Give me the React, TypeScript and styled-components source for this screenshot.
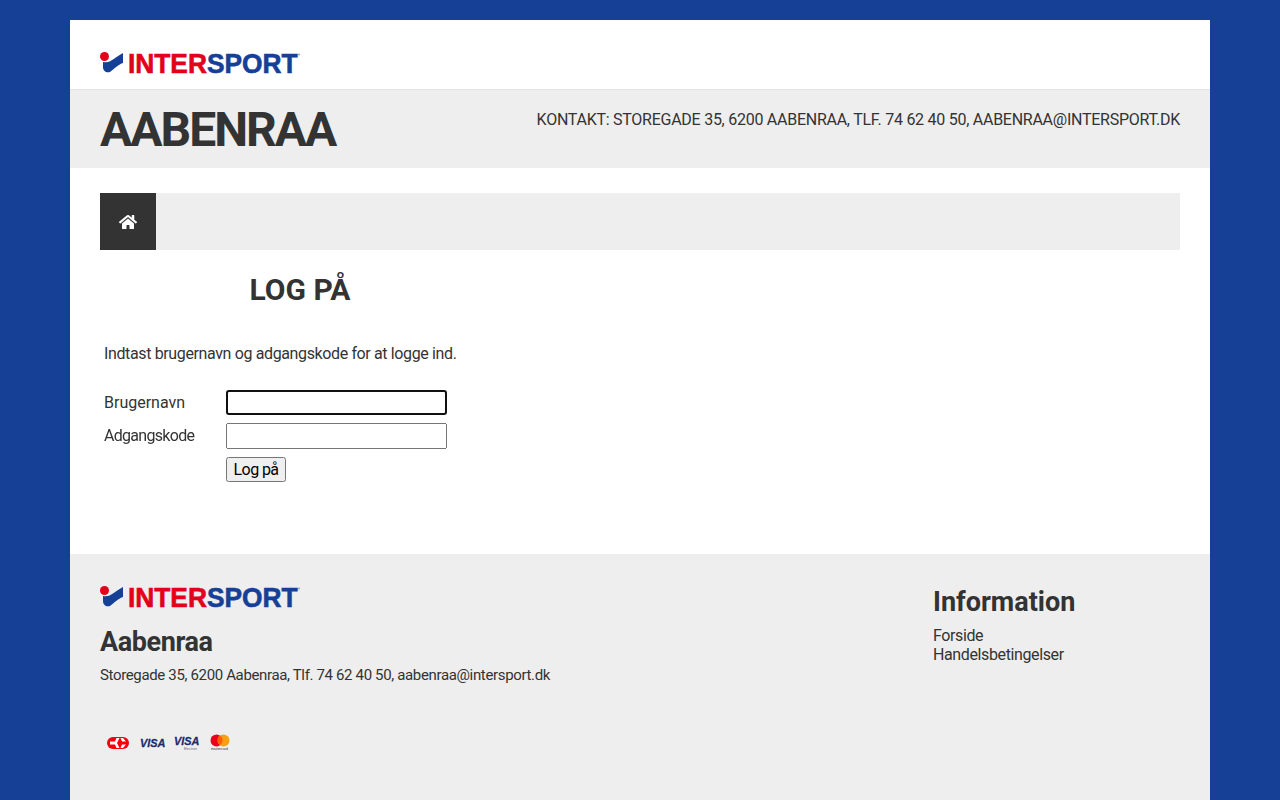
import styled, { createGlobalStyle } from "styled-components";
import { FaHome } from "react-icons/fa";

const GlobalStyle = createGlobalStyle`
  html, body {
    margin: 0;
    padding: 0;
    background: #154096;
    color: #333;
    font-family: Roboto, "Noto Sans", sans-serif;
  }
`;

const Page = styled.div`
  width: 1140px;
  margin: 20px auto 0;
  background: #fff;
`;

const Top = styled.header`
  height: 70px;
  box-sizing: border-box;
  padding: 32px 30px 0;
  border-bottom: 1px solid #e2e2e2;
`;

const Band = styled.div`
  height: 78px;
  box-sizing: border-box;
  padding: 0 30px;
  background: #eee;
  display: flex;
  justify-content: space-between;
  align-items: flex-start;
`;

const ShopName = styled.h1`
  margin: 10px 0 0;
  font-size: 48px;
  line-height: 60px;
  font-weight: 700;
  letter-spacing: -2px;
`;

const Contact = styled.div`
  margin-top: 18px;
  font-size: 16px;
  line-height: 24px;
  letter-spacing: -0.26px;
`;

const Main = styled.main`
  height: 386px;
  box-sizing: border-box;
  padding: 25px 30px 0;
`;

const Crumbs = styled.nav`
  height: 57px;
  background: #eee;
`;

const HomeLink = styled.a`
  width: 56px;
  height: 57px;
  background: #333;
  color: #fff;
  display: flex;
  align-items: center;
  justify-content: center;
  font-size: 18px;
`;

const LoginBox = styled.section`
  width: 400px;
`;

const Title = styled.h2`
  margin: 18px 0 0;
  text-align: center;
  font-size: 30px;
  line-height: 44px;
  font-weight: 700;
`;

const Intro = styled.p`
  margin: 30px 0 0 4px;
  font-size: 16px;
  line-height: 24px;
  letter-spacing: -0.37px;
`;

const Form = styled.form`
  margin: 24px 0 0 4px;
  display: grid;
  grid-template-columns: 122px 221px;
  grid-template-rows: 25px 26px 25px;
  row-gap: 8px;
  align-items: center;
`;

const Label = styled.label<{ $spacing?: number }>`
  font-size: 16px;
  line-height: 24px;
  letter-spacing: ${(p) => p.$spacing ?? 0}px;
`;

const Field = styled.input`
  box-sizing: border-box;
  width: 221px;
  height: 100%;
  padding: 1px 2px;
  font-size: 16px;
`;

const Submit = styled.button`
  grid-column: 2;
  justify-self: start;
  width: 60px;
  height: 25px;
  padding: 0;
  font-family: Roboto, sans-serif;
  font-size: 16px;
  letter-spacing: -0.6px;
`;

const Footer = styled.footer`
  height: 246px;
  box-sizing: border-box;
  padding: 32px 30px 0;
  background: #eee;
  display: flex;
  justify-content: space-between;
`;

const FooterLeft = styled.div``;

const FooterName = styled.h3`
  margin: 14px 0 0;
  font-size: 27px;
  line-height: 40px;
  font-weight: 700;
  letter-spacing: -0.4px;
`;

const FooterAddress = styled.p`
  margin: 1px 0 0;
  font-size: 15px;
  line-height: 24px;
  letter-spacing: -0.35px;
`;

const Cards = styled.div`
  margin-top: 47px;
  margin-left: 6px;
  display: flex;
  align-items: center;
  gap: 9px;
`;

const FooterRight = styled.div`
  width: 247px;
`;

const InfoTitle = styled.h3`
  margin: 0;
  font-size: 27px;
  line-height: 32px;
  font-weight: 700;
`;

const InfoLink = styled.a`
  display: block;
  font-size: 16px;
  line-height: 19px;
  letter-spacing: -0.38px;
  &:first-of-type {
    margin-top: 8px;
  }
`;

const LogoSvg = styled.svg`
  display: block;
  overflow: visible;
`;

const CardSvg = styled.svg`
  overflow: visible;
`;

const Logo = () => (
  <LogoSvg width="200" height="22" viewBox="0 0 200 22">
    <circle cx="4.5" cy="4.5" r="4.5" fill="#e2001a" />
    <path d="M23 1 L23 11 C19 12 14 17 10 20 C6 21 3 19 3 15 L3 10 C10 12 15 5 23 1 Z" fill="#154096" />
    <g transform="scale(0.94 1)" fontFamily="Liberation Sans" fontWeight="700" fontSize="28" strokeWidth="0.6">
      <text x="29.8" y="20.5" fill="#e2001a" stroke="#e2001a">INTER</text>
      <text x="113.8" y="20.5" fill="#154096" stroke="#154096">SPORT</text>
    </g>
    <circle cx="199" cy="2.5" r="1" fill="#9aa" />
  </LogoSvg>
);

const CardIcons = () => (
  <>
    <CardSvg width="24" height="14" viewBox="0 0 24 14">
      <rect x="1" y="1" width="22" height="12" rx="6" fill="#f5000f" />
      <path d="M4 5.6h5l1.5-3.6h3l-2.5 5 2.5 5h-3L9 8.4H4z" fill="#fff" />
      <path d="M20 5.6h-4L14.5 2h2.5l3 3.6zM20 8.4h-4L14.5 12H17z" fill="#fff" />
    </CardSvg>
    <CardSvg width="25" height="12" viewBox="0 0 25 12">
      <g transform="scale(0.95 1)" fontFamily="Liberation Sans" fontWeight="700" fontStyle="italic" fontSize="11.5" fill="#1a2a6c" stroke="#1a2a6c" strokeWidth="0.25">
        <text x="1" y="10">VISA</text>
      </g>
    </CardSvg>
    <CardSvg width="28" height="17" viewBox="0 0 28 17">
      <g transform="scale(0.95 1)" fontFamily="Liberation Sans" fontWeight="700" fontStyle="italic" fontSize="11.5" fill="#1a2a6c" stroke="#1a2a6c" strokeWidth="0.25">
        <text x="1" y="11">VISA</text>
      </g>
      <text x="11" y="15.5" fontFamily="Liberation Sans" fontSize="3.5" fill="#667">Electron</text>
    </CardSvg>
    <CardSvg width="20" height="17" viewBox="0 0 20 17">
      <circle cx="6.5" cy="6.5" r="6" fill="#eb001b" />
      <circle cx="13.5" cy="6.5" r="6" fill="#f79e1b" />
      <path d="M10 1.6a6 6 0 0 1 0 9.8a6 6 0 0 1 0-9.8z" fill="#ff5f00" />
      <text x="1" y="16" fontFamily="Liberation Sans" fontSize="3.4" fill="#333">mastercard</text>
    </CardSvg>
  </>
);

export default function App() {
  return (
    <>
      <GlobalStyle />
      <Page>
        <Top>
          <Logo />
        </Top>
        <Band>
          <ShopName>AABENRAA</ShopName>
          <Contact>KONTAKT: STOREGADE 35, 6200 AABENRAA, TLF. 74 62 40 50, AABENRAA@INTERSPORT.DK</Contact>
        </Band>
        <Main>
          <Crumbs>
            <HomeLink>
              <FaHome />
            </HomeLink>
          </Crumbs>
          <LoginBox>
            <Title>LOG PÅ</Title>
            <Intro>Indtast brugernavn og adgangskode for at logge ind.</Intro>
            <Form onSubmit={(e) => e.preventDefault()}>
              <Label htmlFor="user">Brugernavn</Label>
              <Field id="user" type="text" autoFocus />
              <Label htmlFor="pass" $spacing={-0.7}>Adgangskode</Label>
              <Field id="pass" type="password" />
              <Submit type="submit">Log på</Submit>
            </Form>
          </LoginBox>
        </Main>
        <Footer>
          <FooterLeft>
            <Logo />
            <FooterName>Aabenraa</FooterName>
            <FooterAddress>Storegade 35, 6200 Aabenraa, Tlf. 74 62 40 50, aabenraa@intersport.dk</FooterAddress>
            <Cards>
              <CardIcons />
            </Cards>
          </FooterLeft>
          <FooterRight>
            <InfoTitle>Information</InfoTitle>
            <InfoLink>Forside</InfoLink>
            <InfoLink>Handelsbetingelser</InfoLink>
          </FooterRight>
        </Footer>
      </Page>
    </>
  );
}
